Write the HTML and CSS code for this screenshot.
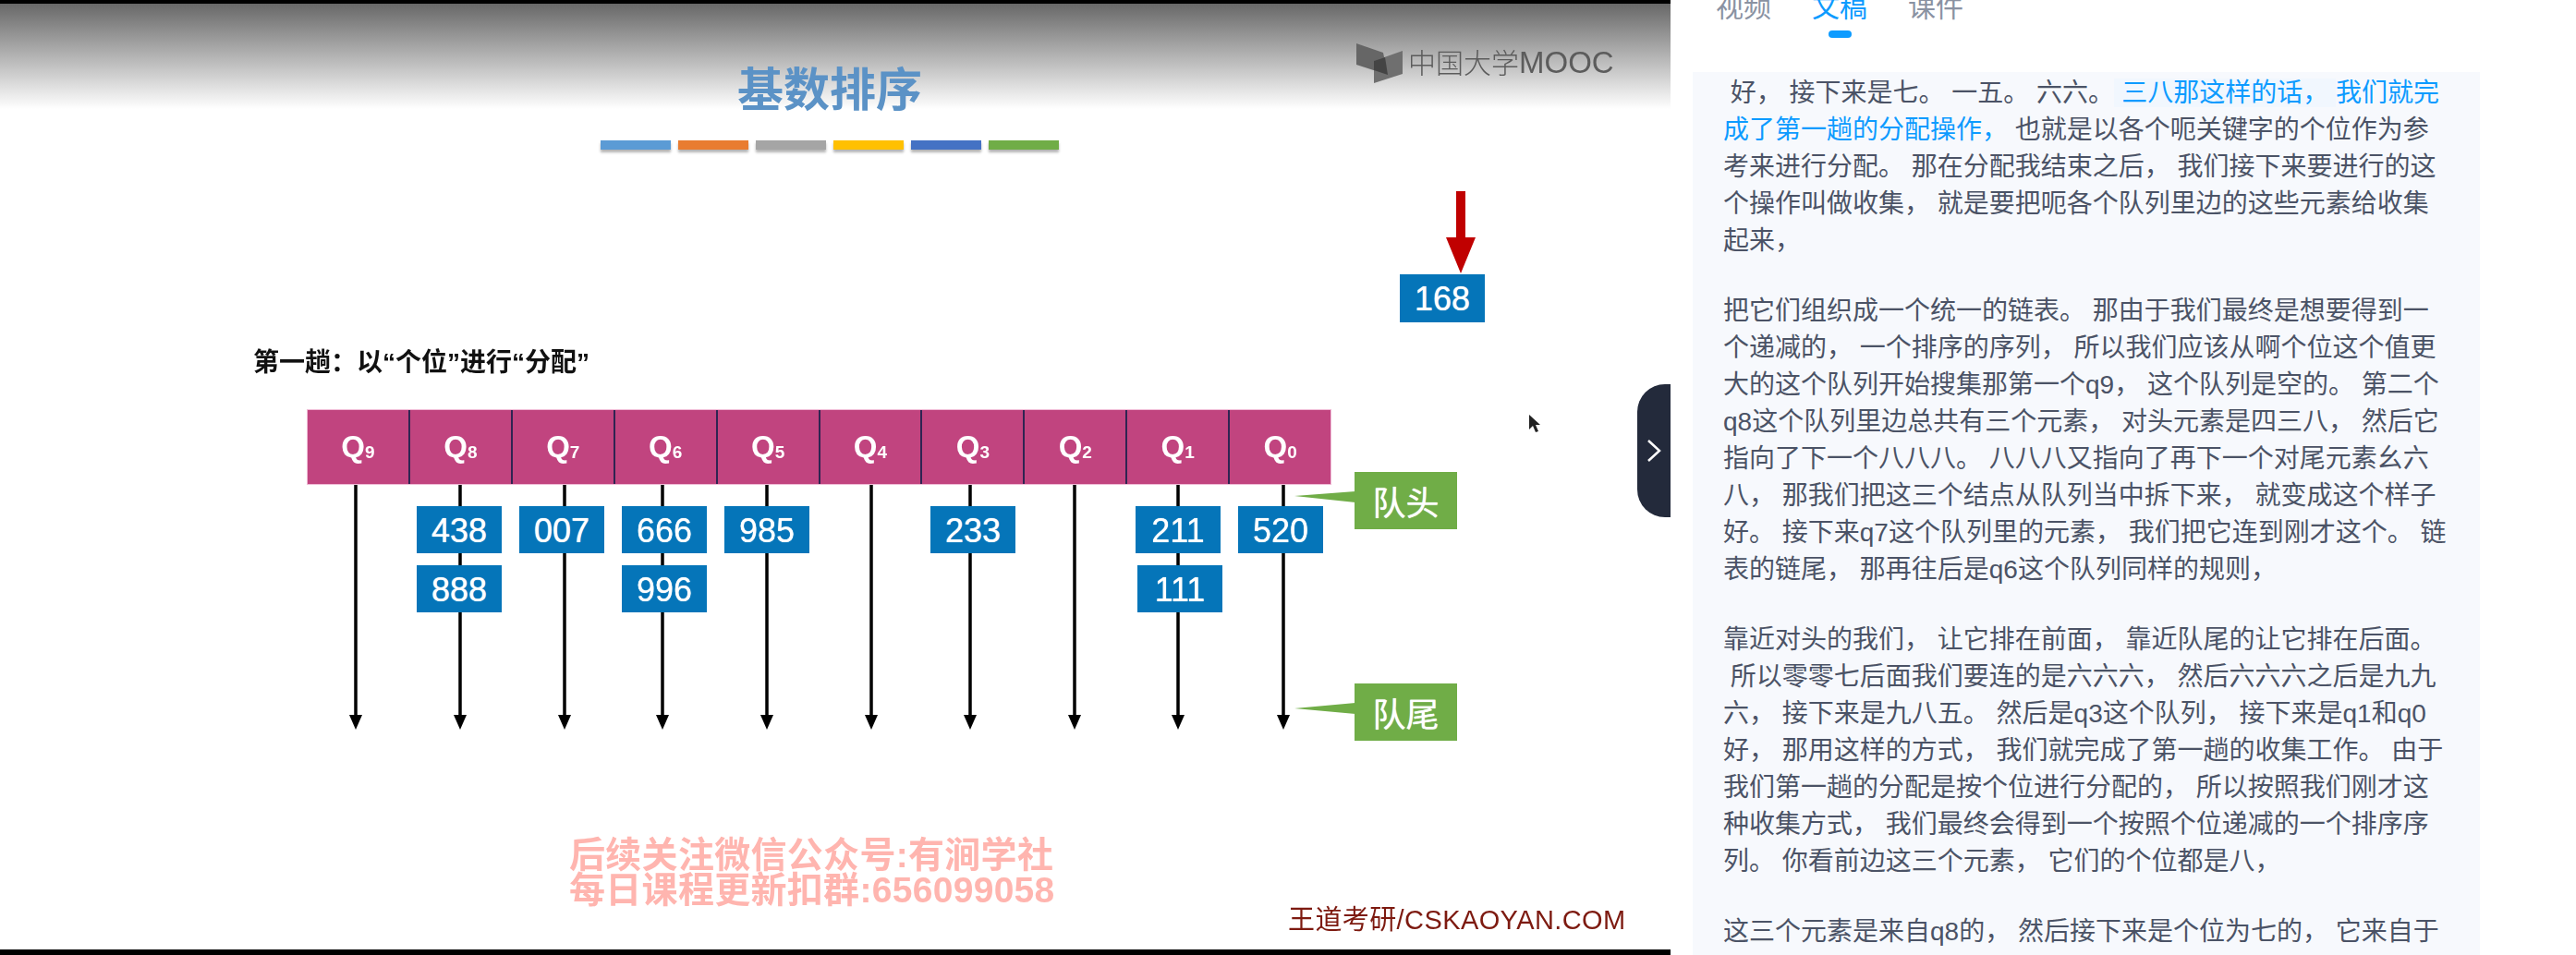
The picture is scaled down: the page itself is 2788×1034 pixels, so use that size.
FILE: index.html
```html
<!DOCTYPE html>
<html lang="zh-CN">
<head>
    <meta charset="UTF-8">
    <meta name="viewport" content="width=device-width, initial-scale=1.0">
    <title>基数排序</title>
    <link rel="stylesheet" href="styles.css">
</head>
<body>
    <div class="player">
        <div class="black-bar top"></div>
        <div class="shade"></div>
        <div class="slide-body"></div>
        <div class="black-bar bottom"></div>

        <!-- slide content: everything sits on the slide canvas -->
        <div class="canvas">
            <svg class="wires" width="1808" height="1034" viewBox="0 0 1808 1034">
                <g class="wire">
                    <line x1="385" y1="524" x2="385" y2="776"/>
                    <line x1="498" y1="524" x2="498" y2="776"/>
                    <line x1="611" y1="524" x2="611" y2="776"/>
                    <line x1="717" y1="524" x2="717" y2="776"/>
                    <line x1="830" y1="524" x2="830" y2="776"/>
                    <line x1="943" y1="524" x2="943" y2="776"/>
                    <line x1="1050" y1="524" x2="1050" y2="776"/>
                    <line x1="1163" y1="524" x2="1163" y2="776"/>
                    <line x1="1275" y1="524" x2="1275" y2="776"/>
                    <line x1="1389" y1="524" x2="1389" y2="776"/>
                </g>
                <g class="heads">
                    <polygon points="378,774 392,774 385,790"/>
                    <polygon points="491,774 505,774 498,790"/>
                    <polygon points="604,774 618,774 611,790"/>
                    <polygon points="710,774 724,774 717,790"/>
                    <polygon points="823,774 837,774 830,790"/>
                    <polygon points="936,774 950,774 943,790"/>
                    <polygon points="1043,774 1057,774 1050,790"/>
                    <polygon points="1156,774 1170,774 1163,790"/>
                    <polygon points="1268,774 1282,774 1275,790"/>
                    <polygon points="1382,774 1396,774 1389,790"/>
                </g>
                <polygon class="red" points="1576,207 1586,207 1586,257 1597,257 1581,296 1565,257 1576,257"/>
                <polygon class="tail" points="1401,537 1467,532 1467,544"/>
                <polygon class="tail" points="1401,767 1467,761 1467,773"/>
                <polygon class="cursor" points="1655,449 1655,465 1659,461 1662,468 1665,467 1662,460 1667,460"/>
                <!-- book mark of the mooc logo -->
                <polygon class="book-a" points="1468,47 1497,57 1502,81 1468,70"/>
                <polygon class="book-b" points="1487,66 1518,55 1518,80 1487,90"/>
                <polygon class="book-c" points="1487,66 1499,62 1502,81 1487,76"/>
            </svg>

            <h1 class="title">基数排序</h1>
            <div class="title-bars">
                <span class="c-blue"></span>
                <span class="c-orange"></span>
                <span class="c-grey"></span>
                <span class="c-yellow"></span>
                <span class="c-indigo"></span>
                <span class="c-green"></span>
            </div>

            <div class="mooc">中国大学<span class="mooc-latin">MOOC</span></div>
            <div class="pass-title">第一趟：以“个位”进行“分配”</div>

            <div class="queues">
                <div class="queue">Q<span class="sub">9</span></div>
                <div class="queue">Q<span class="sub">8</span></div>
                <div class="queue">Q<span class="sub">7</span></div>
                <div class="queue">Q<span class="sub">6</span></div>
                <div class="queue">Q<span class="sub">5</span></div>
                <div class="queue">Q<span class="sub">4</span></div>
                <div class="queue">Q<span class="sub">3</span></div>
                <div class="queue">Q<span class="sub">2</span></div>
                <div class="queue">Q<span class="sub">1</span></div>
                <div class="queue">Q<span class="sub">0</span></div>
            </div>

            <div class="key k168">168</div>
            <div class="key k438">438</div>
            <div class="key k888">888</div>
            <div class="key k007">007</div>
            <div class="key k666">666</div>
            <div class="key k996">996</div>
            <div class="key k985">985</div>
            <div class="key k233">233</div>
            <div class="key k211">211</div>
            <div class="key k111">111</div>
            <div class="key k520">520</div>

            <div class="tag tag-head">队头</div>
            <div class="tag tag-tail">队尾</div>

            <div class="watermark">后续关注微信公众号:有涧学社<br>每日课程更新扣群:656099058</div>
            <div class="site">王道考研/CSKAOYAN.COM</div>
        </div>

        <div class="collapse">
            <svg width="16" height="24" viewBox="0 0 16 24"><polyline points="2,1 14,12 2,23"/></svg>
        </div>
    </div>

    <div class="side">
        <div class="tabs">
            <div class="tab">视频</div>
            <div class="tab active">文稿</div>
            <div class="tab">课件</div>
        </div>
        <div class="transcript">
            <p>&nbsp;好， 接下来是七。 一五。 六六。<span class="now hover">三八那这样的话， </span><span class="now">我们就完<br>成了第一趟的分配操作， </span>也就是以各个呃关键字的个位作为参<br>考来进行分配。 那在分配我结束之后， 我们接下来要进行的这<br>个操作叫做收集， 就是要把呃各个队列里边的这些元素给收集<br>起来，</p>
            <p>把它们组织成一个统一的链表。 那由于我们最终是想要得到一<br>个递减的， 一个排序的序列， 所以我们应该从啊个位这个值更<br>大的这个队列开始搜集那第一个q9， 这个队列是空的。 第二个<br>q8这个队列里边总共有三个元素， 对头元素是四三八， 然后它<br>指向了下一个八八八。 八八八又指向了再下一个对尾元素幺六<br>八， 那我们把这三个结点从队列当中拆下来， 就变成这个样子<br>好。 接下来q7这个队列里的元素， 我们把它连到刚才这个。 链<br>表的链尾， 那再往后是q6这个队列同样的规则，</p>
            <p>靠近对头的我们， 让它排在前面， 靠近队尾的让它排在后面。<br>&nbsp;所以零零七后面我们要连的是六六六， 然后六六六之后是九九<br>六， 接下来是九八五。 然后是q3这个队列， 接下来是q1和q0<br>好， 那用这样的方式， 我们就完成了第一趟的收集工作。 由于<br>我们第一趟的分配是按个位进行分配的， 所以按照我们刚才这<br>种收集方式， 我们最终会得到一个按照个位递减的一个排序序<br>列。 你看前边这三个元素， 它们的个位都是八，</p>
            <p>这三个元素是来自q8的， 然后接下来是个位为七的， 它来自于</p>
        </div>
    </div>
</body>
</html>
```

FILE: styles.css
```css
html, body {
    height: 100%;
    margin: 0;
    overflow: hidden;
    background-color: #fff;
}
body {
    display: flex;
    font-family: "Liberation Sans", "Noto Sans CJK SC", sans-serif;
}

/* video side */
.player {
    position: relative;
    flex: 0 0 1808px;
    display: flex;
    flex-direction: column;
}
.black-bar {
    background-color: #000;
}
.black-bar.top {
    height: 4px;
}
.black-bar.bottom {
    height: 6px;
}
.shade {
    height: 114px;
    background: linear-gradient(#686868, #fff);
}
.slide-body {
    flex: 1;
    background-color: #fff;
}
.canvas {
    position: absolute;
    left: 0;
    top: 0;
    width: 1808px;
    height: 1034px;
    filter: blur(0.6px);
}
.wires {
    position: absolute;
    left: 0;
    top: 0;
}
.wire line {
    stroke: #000;
    stroke-width: 3.5;
}
.heads polygon {
    fill: #000;
}
.red {
    fill: #c00000;
}
.tail {
    fill: #70ad47;
}
.cursor {
    fill: #222;
}
.book-a {
    fill: #666;
}
.book-b {
    fill: #6f6f6f;
}
.book-c {
    fill: #444;
}

.title {
    position: absolute;
    left: 798px;
    top: 67px;
    margin: 0;
    font-size: 50px;
    line-height: 62px;
    font-weight: bold;
    color: #5b92c6;
}
.title-bars {
    position: absolute;
    left: 650px;
    top: 152px;
    display: flex;
    gap: 8px;
}
.title-bars span {
    width: 76px;
    height: 10px;
    box-shadow: 0 3px 3px rgba(0, 0, 0, 0.3);
}
.c-blue { background-color: #5b9bd5; }
.c-orange { background-color: #e97c30; }
.c-grey { background-color: #a5a5a5; }
.c-yellow { background-color: #ffc000; }
.c-indigo { background-color: #4472c4; }
.c-green { background-color: #70ad47; }

.mooc {
    position: absolute;
    left: 1524px;
    top: 49px;
    font-size: 30px;
    font-weight: 300;
    line-height: 38px;
    color: #5c5c5c;
    white-space: nowrap;
}
.mooc-latin {
    font-size: 33px;
}
.pass-title {
    position: absolute;
    left: 274px;
    top: 373px;
    font-size: 28px;
    line-height: 40px;
    font-weight: bold;
    color: #111;
}

.queues {
    position: absolute;
    left: 333px;
    top: 444px;
    width: 1107px;
    height: 80px;
    display: flex;
    background-color: #c1447f;
    box-shadow: 0 0 0 1px #f0bcd6;
}
.queue {
    flex: 1;
    display: flex;
    align-items: center;
    justify-content: center;
    border-left: 2px solid #2f2452;
    font-size: 33px;
    font-weight: bold;
    color: #fff;
}
.queue:first-child {
    border-left: none;
}
.sub {
    font-size: 19px;
    margin-top: 12px;
}

.key {
    position: absolute;
    width: 92px;
    height: 51px;
    box-sizing: border-box;
    padding-top: 2px;
    display: flex;
    align-items: center;
    justify-content: center;
    background-color: #0575b9;
    font-size: 36px;
    color: #fff;
    text-shadow: 0 0 1px #fff;
}
.k168 { left: 1515px; top: 297px; height: 52px; }
.k438 { left: 451px; top: 548px; }
.k888 { left: 451px; top: 612px; }
.k007 { left: 562px; top: 548px; }
.k666 { left: 673px; top: 548px; }
.k996 { left: 673px; top: 612px; }
.k985 { left: 784px; top: 548px; }
.k233 { left: 1007px; top: 548px; }
.k211 { left: 1229px; top: 548px; }
.k111 { left: 1231px; top: 612px; }
.k520 { left: 1340px; top: 548px; }

.tag {
    position: absolute;
    left: 1466px;
    width: 111px;
    height: 62px;
    display: flex;
    align-items: center;
    justify-content: center;
    background-color: #70ad47;
    font-size: 36px;
    color: #fff;
    text-shadow: 0 0 1px #fff;
}
.tag-head { top: 511px; }
.tag-tail { top: 740px; }

.watermark {
    position: absolute;
    left: 616px;
    top: 907px;
    font-size: 39px;
    line-height: 38px;
    letter-spacing: 0.3px;
    font-weight: bold;
    color: #ffb5af;
    white-space: nowrap;
}
.site {
    position: absolute;
    left: 1394px;
    top: 978px;
    font-size: 29px;
    line-height: 36px;
    letter-spacing: 0.4px;
    color: #7d1a10;
    white-space: nowrap;
}

.collapse {
    position: absolute;
    right: 0;
    top: 416px;
    width: 36px;
    height: 144px;
    display: flex;
    align-items: center;
    justify-content: center;
    background-color: #232a3b;
    border-radius: 30px 0 0 30px;
}
.collapse polyline {
    fill: none;
    stroke: #fff;
    stroke-width: 2.5;
}

/* transcript side */
.side {
    flex: 1;
    padding-left: 24px;
    padding-right: 104px;
}
.tabs {
    height: 85px;
    margin-top: -7px;
    padding-left: 25px;
    display: flex;
    gap: 44px;
}
.tab {
    display: flex;
    flex-direction: column;
    align-items: center;
    gap: 10px;
    font-size: 30px;
    line-height: 30px;
    color: #8a92a2;
}
.tab.active {
    color: #0d9bff;
}
.tab.active::after {
    content: "";
    width: 25px;
    height: 8px;
    border-radius: 4px;
    background-color: #0d9bff;
}
.transcript {
    height: 956px;
    overflow: hidden;
    box-sizing: border-box;
    padding: 3px 0 0 33px;
    background-color: #f7f9fd;
    font-size: 28px;
    line-height: 40px;
    color: #4b5366;
    white-space: nowrap;
}
.transcript p {
    margin: 0 0 36px;
}
.now {
    color: #0d9bff;
}
.hover {
    padding-left: 8px;
    background-color: #f1f7fe;
}
```
